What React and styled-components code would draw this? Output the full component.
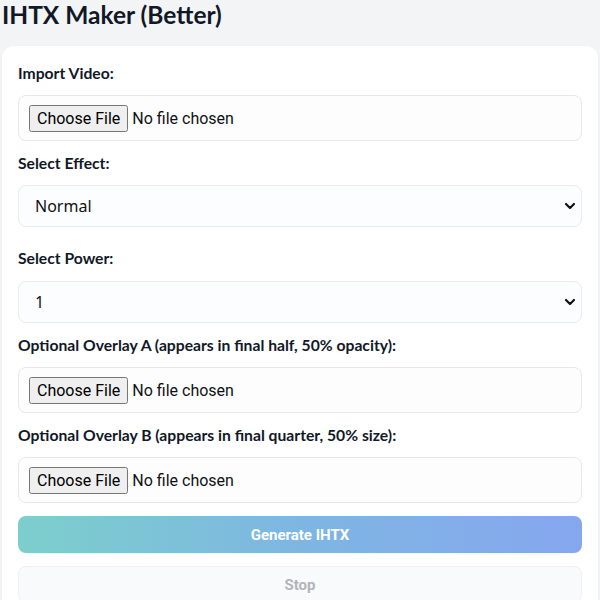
import React from "react";
import styled, { createGlobalStyle } from "styled-components";

const Global = createGlobalStyle`
  html, body { margin: 0; padding: 0; background: #f3f4f6; }
  body { font-family: "Lato", "Noto Sans", sans-serif; color: #111827; }
  * { box-sizing: border-box; }
`;

const Page = styled.div`
  padding: 0 2px;
  display: flex;
  flex-direction: column;
`;

const Title = styled.h1`
  margin: 0 0 16px;
  font-size: 24.5px;
  line-height: 30px;
  font-weight: 700;
  color: #111827;
`;

const Card = styled.div`
  background: #ffffff;
  border-radius: 12px;
  box-shadow: 0 1px 3px rgba(0, 0, 0, 0.05);
  padding: 17px 16px 0;
  display: flex;
  flex-direction: column;
`;

const Field = styled.div`
  display: flex;
  flex-direction: column;
  gap: ${(p) => p.$gap || 12}px;
  margin-bottom: ${(p) => p.$after || 12}px;
`;

const Label = styled.label`
  font-size: 15.7px;
  line-height: 20px;
  font-weight: 700;
  color: #111827;
`;

const FileBox = styled.div`
  display: flex;
  align-items: center;
  width: 100%;
  height: 46px;
  padding: 0 10px;
  border: 1px solid #e5e7eb;
  border-radius: 8px;
  background: #fdfdfe;
`;

const FileInput = styled.input`
  font-family: "Roboto", "Noto Sans", sans-serif;
  font-size: 16px;
  color: #111;
  &::file-selector-button {
    font-family: "Roboto", "Noto Sans", sans-serif;
    font-size: 16px;
    padding: 2px 6px;
    margin-right: 4px;
  }
`;

const SelectWrap = styled.div`
  position: relative;
`;

const Select = styled.select`
  appearance: none;
  width: 100%;
  height: 42px;
  padding: 0 16px;
  border: 1px solid #e9ebef;
  border-radius: 8px;
  background: #fcfdfe;
  font-family: "Noto Sans", "Roboto", sans-serif;
  font-size: 16px;
  color: #111;
`;

const Chevron = styled.svg`
  position: absolute;
  right: 5px;
  top: 50%;
  transform: translateY(-50%);
  pointer-events: none;
`;

const Button = styled.button`
  width: 100%;
  height: 37px;
  border-radius: 8px;
  font-family: "Roboto", "Noto Sans", sans-serif;
  font-size: 15px;
  font-weight: 700;
  margin-top: 1px;
  margin-bottom: 12px;
  cursor: default;
  border: ${(p) => (p.$primary ? "none" : "1px solid #eef0f3")};
  background: ${(p) =>
    p.$primary ? "linear-gradient(90deg, #7ccfcc 0%, #7eb6e2 50%, #86a7ef 100%)" : "#f9fafb"};
  color: ${(p) => (p.$primary ? "#ffffff" : "#b3b5b9")};
`;

function SelectField({ label, options, after, gap }) {
  return (
    <Field $after={after} $gap={gap}>
      <Label>{label}</Label>
      <SelectWrap>
        <Select defaultValue={options[0]}>
          {options.map((o) => (
            <option key={o}>{o}</option>
          ))}
        </Select>
        <Chevron width="14" height="14" viewBox="0 0 14 14">
          <polyline points="3,5 7,9 11,5" fill="none" stroke="#111" strokeWidth="2.2" strokeLinecap="round" strokeLinejoin="round" />
        </Chevron>
      </SelectWrap>
    </Field>
  );
}

function FileField({ label }) {
  return (
    <Field>
      <Label>{label}</Label>
      <FileBox>
        <FileInput type="file" />
      </FileBox>
    </Field>
  );
}

export default function App() {
  return (
    <>
      <Global />
      <Page>
        <Title>IHTX Maker (Better)</Title>
        <Card>
          <FileField label="Import Video:" />
          <SelectField label="Select Effect:" options={["Normal", "Reverse", "Mirror"]} after={21} />
          <SelectField label="Select Power:" options={["1", "2", "3", "4", "5"]} gap={13} />
          <FileField label="Optional Overlay A (appears in final half, 50% opacity):" />
          <FileField label="Optional Overlay B (appears in final quarter, 50% size):" />
          <Button $primary disabled>Generate IHTX</Button>
          <Button disabled>Stop</Button>
        </Card>
      </Page>
    </>
  );
}
